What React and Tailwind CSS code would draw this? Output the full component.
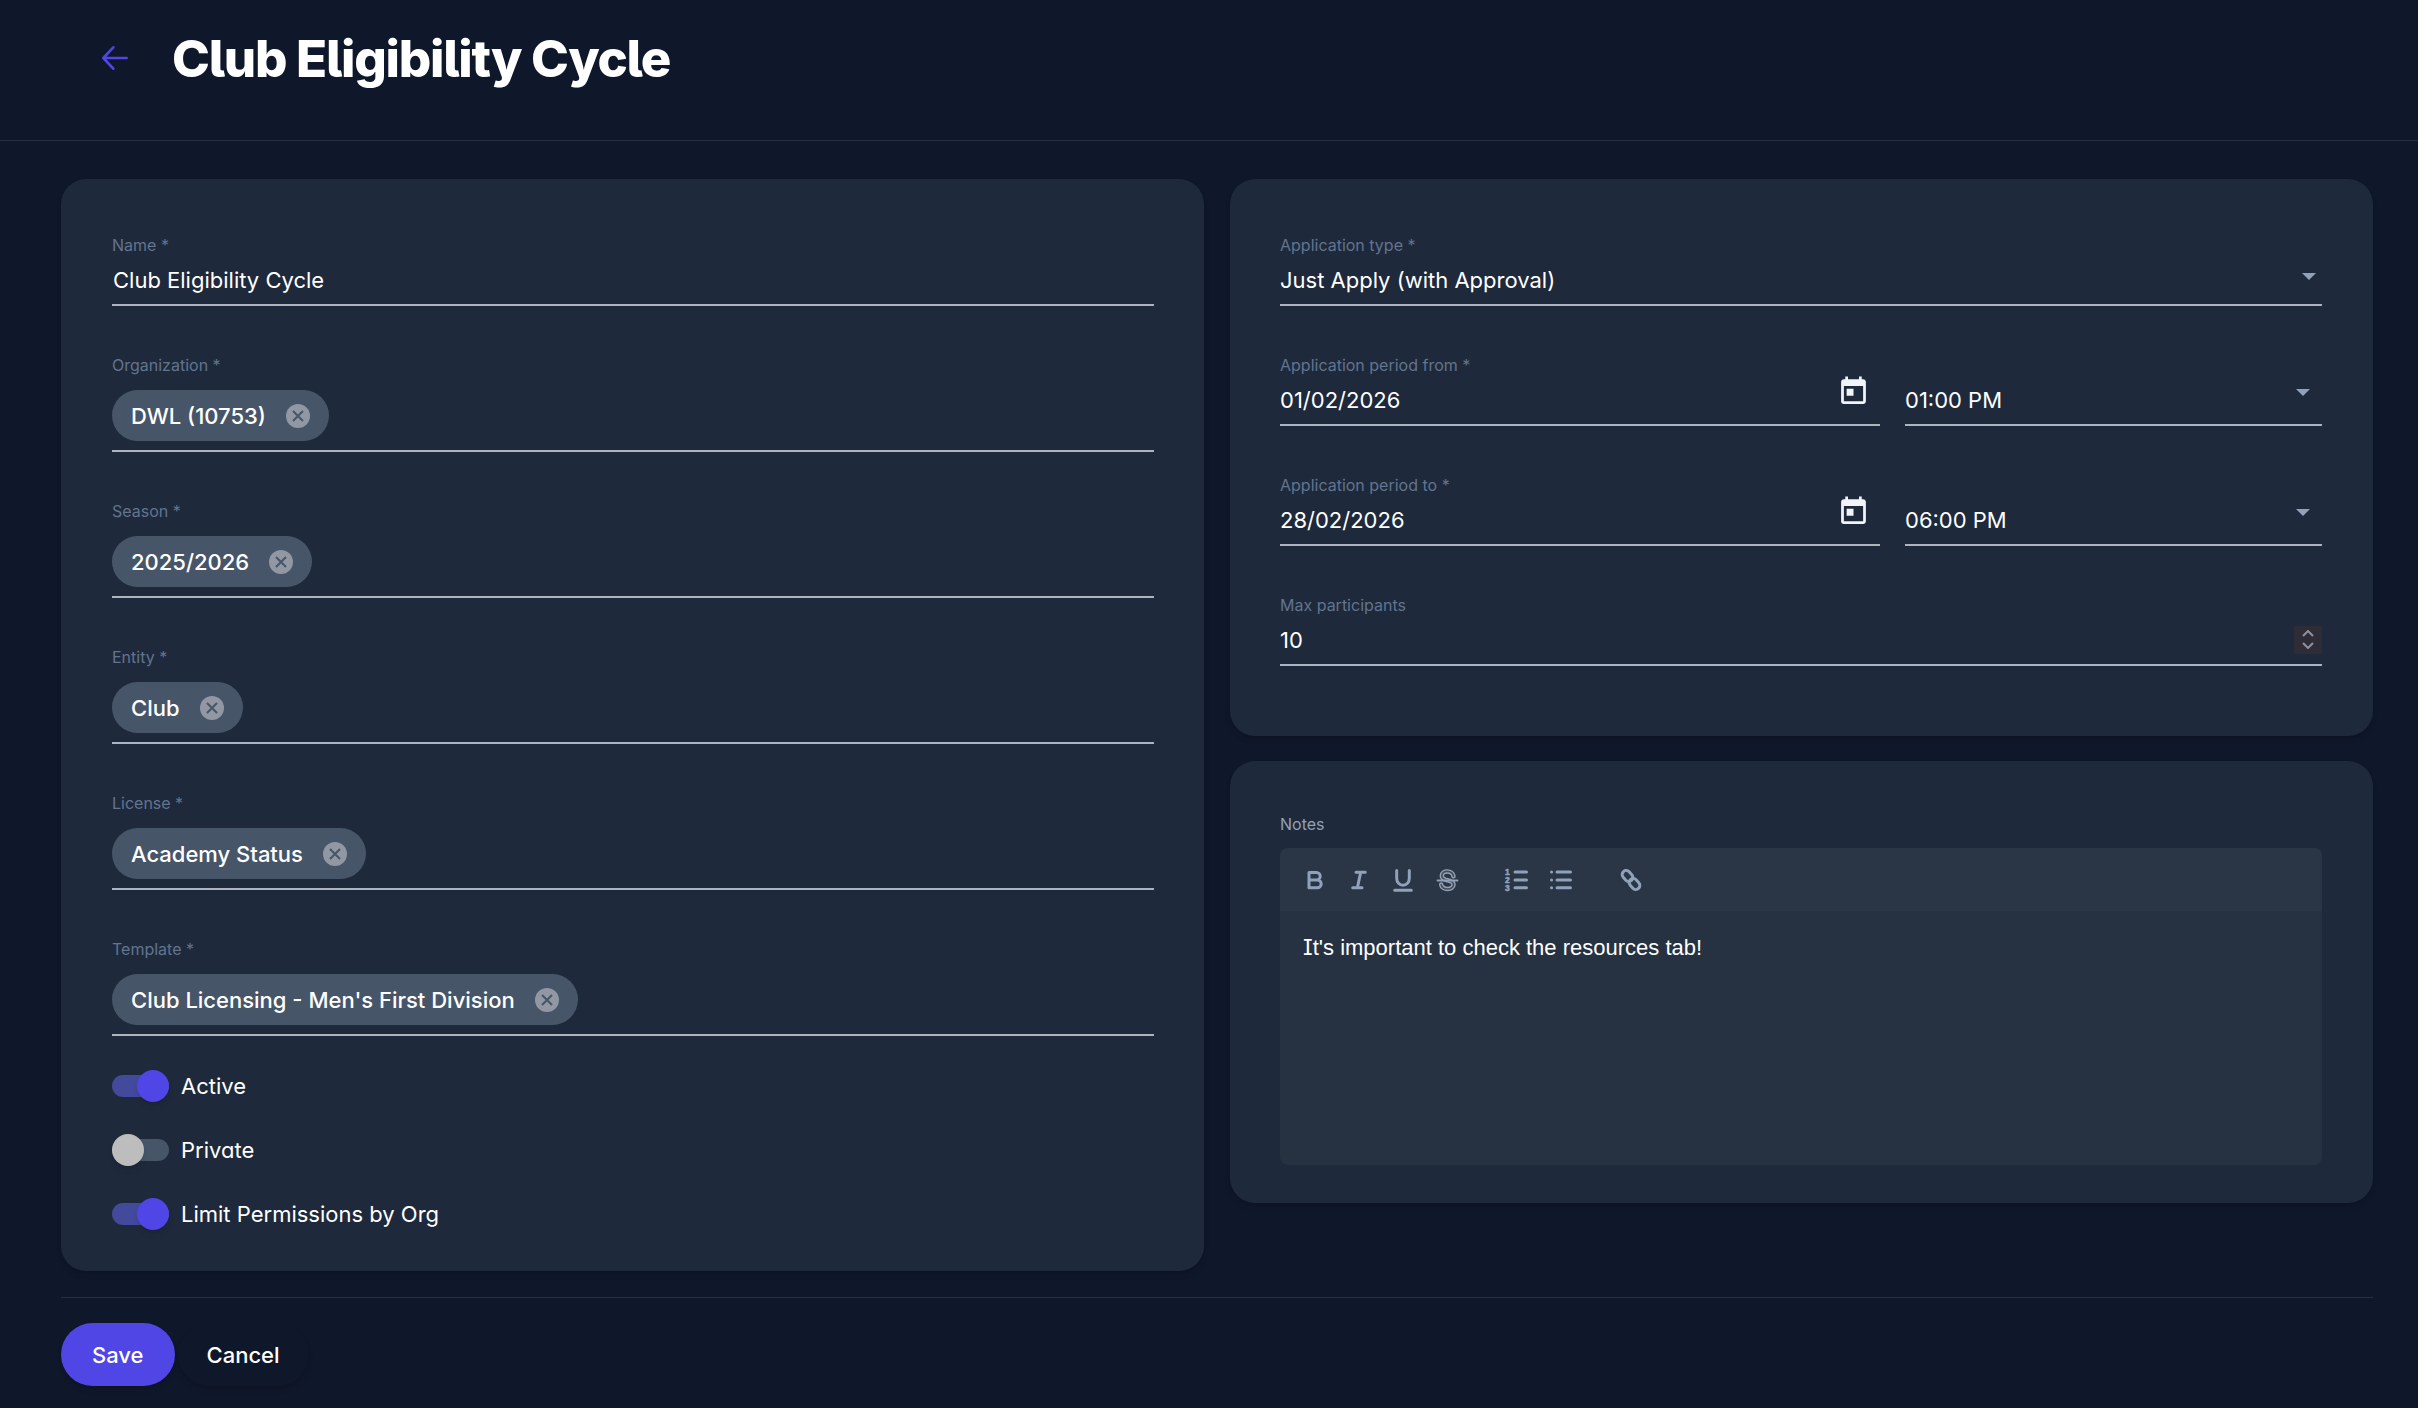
import { useState } from 'react'

const chipFields = [
  { id: 'organization', label: 'Organization *', value: 'DWL (10753)' },
  { id: 'season', label: 'Season *', value: '2025/2026' },
  { id: 'entity', label: 'Entity *', value: 'Club' },
  { id: 'license', label: 'License *', value: 'Academy Status' },
  { id: 'template', label: 'Template *', value: "Club Licensing - Men's First Division" },
]

const periods = [
  { id: 'from', label: 'Application period from *', date: '01/02/2026', time: '01:00 PM' },
  { id: 'to', label: 'Application period to *', date: '28/02/2026', time: '06:00 PM' },
]

export default function App() {
  const [name, setName] = useState('Club Eligibility Cycle')
  const [participants, setParticipants] = useState(10)

  return (
    <div className="min-h-screen bg-[#0f172a] font-['Inter',sans-serif] text-[22px] leading-[30px] text-white">
      <header className="flex h-[141px] items-start gap-[42px] border-b border-[#272f41] pt-[26px] pl-[98px]">
        <button aria-label="Back" className="mt-4 text-[#4f46e5]"><BackIcon /></button>
        <h1 className="text-[51px] leading-[66px] font-extrabold tracking-tight [font-feature-settings:'cv05','cv08','cv11']">Club Eligibility Cycle</h1>
      </header>

      <main className="pt-[38px] pr-[45px] pl-[61px]">
        <div className="grid grid-cols-2 items-start gap-[26px]">
          <Card className="pr-[50px] pb-[41px] pl-[51px]">
            <Field id="name" label="Name *">
              <input id="name" value={name} onChange={(e) => setName(e.target.value)} className="h-[49px] w-full bg-transparent pl-px outline-none" />
            </Field>
            {chipFields.map(f => <ChipField key={f.id} {...f} />)}
            <div className="-mt-[10px] flex flex-col gap-8">
              <Toggle label="Active" initial={true} />
              <Toggle label="Private" initial={false} />
              <Toggle label="Limit Permissions by Org" initial={true} />
            </div>
          </Card>

          <div className="flex flex-col gap-[25px]">
            <Card className="pr-[51px] pb-[26px] pl-[50px]">
              <Field id="type" label="Application type *">
                <Select id="type" value="Just Apply (with Approval)" caret="mr-[6px] -mt-[6px]" />
              </Field>
              {periods.map(p => (
                <div key={p.id} className="grid grid-cols-[600fr_417fr] items-end gap-[25px]">
                  <Field id={p.id} label={p.label}>
                    <div className="flex h-[49px] items-center">
                      <input id={p.id} defaultValue={p.date} className="h-full min-w-0 flex-1 bg-transparent outline-none" />
                      <button aria-label="Open calendar" className="mr-[10px] mb-4 text-slate-100"><CalendarIcon /></button>
                    </div>
                  </Field>
                  <Field id={p.id + '-time'}>
                    <Select id={p.id + '-time'} value={p.time} caret="mr-[12px] -mt-[14px]" />
                  </Field>
                </div>
              ))}
              <Field id="max" label="Max participants">
                <div className="flex h-[49px] items-center">
                  <input id="max" value={participants} onChange={(e) => setParticipants(Number(e.target.value) || 0)} className="h-full min-w-0 flex-1 bg-transparent outline-none" />
                  <div className="flex h-7 w-7 flex-col items-center justify-center gap-[5px] bg-[#2e2c36] text-[#908fa0]">
                    <button aria-label="Increase" onClick={() => setParticipants(participants + 1)}><Chevron d="M1 6 6 1l5 5" /></button>
                    <button aria-label="Decrease" onClick={() => setParticipants(participants - 1)}><Chevron d="m1 1 5 5 5-5" /></button>
                  </div>
                </div>
              </Field>
            </Card>

            <Card className="pr-[51px] pb-[38px] pl-[50px]">
              <p id="notes-label" className="mb-[11px] text-[16px] leading-[25px] text-slate-400">Notes</p>
              <div className="overflow-hidden rounded-[8px] bg-[#263241]">
                <Toolbar />
                {/* rich text area, the capital I comes from the heading face */}
                <div
                  role="textbox" aria-multiline="true" aria-labelledby="notes-label" contentEditable suppressContentEditableWarning
                  className="h-[254px] px-[23px] py-[21px] font-['Liberation_Sans',sans-serif] outline-none"
                >
                  <span className="font-['Inter',sans-serif] [font-feature-settings:'cv08']">I</span>t's important to check the resources tab!
                </div>
              </div>
            </Card>
          </div>
        </div>

        <footer className="mt-[26px] flex gap-[3px] border-t border-[#272f41] pt-[25px] font-medium">
          <button className="h-[63px] rounded-full bg-[#4f46e5] px-[31px] shadow-md">Save</button>
          <button className="h-[63px] rounded-full px-[29px] shadow-md">Cancel</button>
        </footer>
      </main>
    </div>
  )
}

function Card({ className, children }) {
  return <section className={`rounded-[25px] bg-[#1e293b] pt-[51px] shadow-md ${className}`}>{children}</section>
}

function Field({ id, label, children }) {
  return (
    <div className="mb-[44px]">
      {label && <label htmlFor={id} className="block h-[25px] text-[16px] leading-[30px] text-slate-500">{label}</label>}
      <div className="border-b-2 border-[#adb4bd]">{children}</div>
    </div>
  )
}

function ChipField({ id, label, value }) {
  const [chips, setChips] = useState([value])
  return (
    <Field id={id} label={label}>
      <div className="flex h-[75px] items-end gap-2 pb-[9px]">
        {chips.map(c => (
          <span key={c} className="flex h-[51px] items-center gap-[20px] rounded-full bg-[#475569] px-[19px] font-medium">
            {c}
            <button aria-label={`Remove ${c}`} onClick={() => setChips([])}><RemoveIcon /></button>
          </span>
        ))}
        <input id={id} className="h-[51px] min-w-0 flex-1 bg-transparent outline-none" />
      </div>
    </Field>
  )
}

function Select({ id, value, caret }) {
  return (
    <div className="grid h-[49px] items-center">
      <select id={id} aria-label={id} className="col-start-1 row-start-1 h-full w-full appearance-none bg-transparent outline-none">
        <option>{value}</option>
      </select>
      <svg width="14" height="7" viewBox="0 0 14 7" className={`pointer-events-none col-start-1 row-start-1 justify-self-end fill-slate-400 ${caret}`}><path d="M0 0h14L7 7z" /></svg>
    </div>
  )
}

function Toggle({ label, initial }) {
  const [on, setOn] = useState(initial)
  return (
    <label className="flex h-8 items-center gap-[12px]">
      <input type="checkbox" role="switch" checked={on} onChange={() => setOn(!on)} className="peer sr-only" />
      <span className={`flex h-[22px] w-[57px] items-center rounded-full ${on ? 'justify-end bg-[#434a9c]' : 'bg-[#475569]'}`}>
        <span className={`h-8 w-8 rounded-full shadow-md ${on ? 'bg-[#4f46e5]' : 'bg-[#bdbdbd]'}`} />
      </span>
      <span className="[font-feature-settings:'cv05','cv08','cv11']">{label}</span>
    </label>
  )
}

function Toolbar() {
  return (
    <div className="flex h-[63px] items-center gap-[20px] bg-[#2a3545] px-[23px] text-slate-400">
      <Tool label="Bold"><path d="M6 4.500h7.500a3.750 3.750 0 0 1 0 7.500H6zM6 12h8.300a3.900 3.900 0 0 1 0 7.800H6z" /></Tool>
      <Tool label="Italic"><path d="M9 4.200h9.300M5.700 19.800H15M13.700 4.200l-3.300 15.600" /></Tool>
      <Tool label="Underline"><path d="M5.700 2.500v8a6.300 6.800 0 0 0 12.600 0v-8M3.700 22.300h16.600" /></Tool>
      <Tool label="Strike">
        <path strokeWidth="4.5" d={strikeS} />
        <path stroke="#4b4a4e" strokeWidth="1.6" d={strikeS} />
        <path strokeWidth="1.800" d="M2.500 12.500h20" />
      </Tool>
      <span className="w-[6px]" />
      <Tool label="Numbered list">
        <path d="M10 4h11.500M10 12h11.500M10 19.800h11.500" />
        <g fill="currentColor" stroke="currentColor" strokeWidth="0.5" fontFamily="Liberation Sans" fontWeight="700" fontSize="8.500">
          <text x="0" y="6.500">1</text>
          <text x="0" y="15">2</text>
          <text x="0" y="23">3</text>
        </g>
      </Tool>
      <Tool label="Bulleted list"><path d="M8 4h13.500M8 12h13.500M8 19.800h13.500M2.500 4h.1M2.500 12h.1M2.500 19.800h.1" /></Tool>
      <span className="w-[6px]" />
      <Tool label="Link">
        <rect x="2.500" y="4" width="12" height="8" rx="4" transform="rotate(48 8.500 8)" />
        <rect x="9.500" y="12" width="12" height="8" rx="4" transform="rotate(48 15.500 16)" />
      </Tool>
    </div>
  )
}

const strikeS = 'M18.500 8.300C17.500 1.700 6.800 2 6.800 7.700c0 3 3 4 5.700 4.600s6 1.500 6 4.300c0 6-11.500 5.800-12.300 0'

function Tool({ label, children }) {
  return (
    <button aria-label={label} title={label}>
      <svg width="24" height="24" viewBox="0 0 24 24" className="block overflow-visible" fill="none" stroke="currentColor" strokeWidth="3" strokeLinecap="round" strokeLinejoin="round">{children}</svg>
    </button>
  )
}

function BackIcon() {
  return (
    <svg width="32" height="32" viewBox="0 0 24 24" fill="none" stroke="currentColor" strokeWidth="2" strokeLinecap="round" strokeLinejoin="round"><path d="M21.500 12H4M11.500 4 4 12l7.500 8" /></svg>
  )
}

function CalendarIcon() {
  return (
    <svg width="33" height="33" viewBox="0 0 24 24" fill="currentColor"><path d="M19 3h-1V1h-2v2H8V1H6v2H5c-1.110 0-1.990.9-1.990 2L3 19a2 2 0 0 0 2 2h14c1.100 0 2-.9 2-2V5c0-1.100-.9-2-2-2zm0 16H5V8h14v11zM7 10h5v5H7z" /></svg>
  )
}

function RemoveIcon() {
  return (
    <svg width="24" height="24" viewBox="0 0 24 24" className="block"><circle cx="12" cy="12" r="12" fill="#9198a3" /><path d="m7 7 10 10M17 7 7 17" stroke="#475569" strokeWidth="2" /></svg>
  )
}

function Chevron({ d }) {
  return <svg width="12" height="7" viewBox="0 0 12 7" className="block" fill="none" stroke="currentColor" strokeWidth="2"><path d={d} /></svg>
}
